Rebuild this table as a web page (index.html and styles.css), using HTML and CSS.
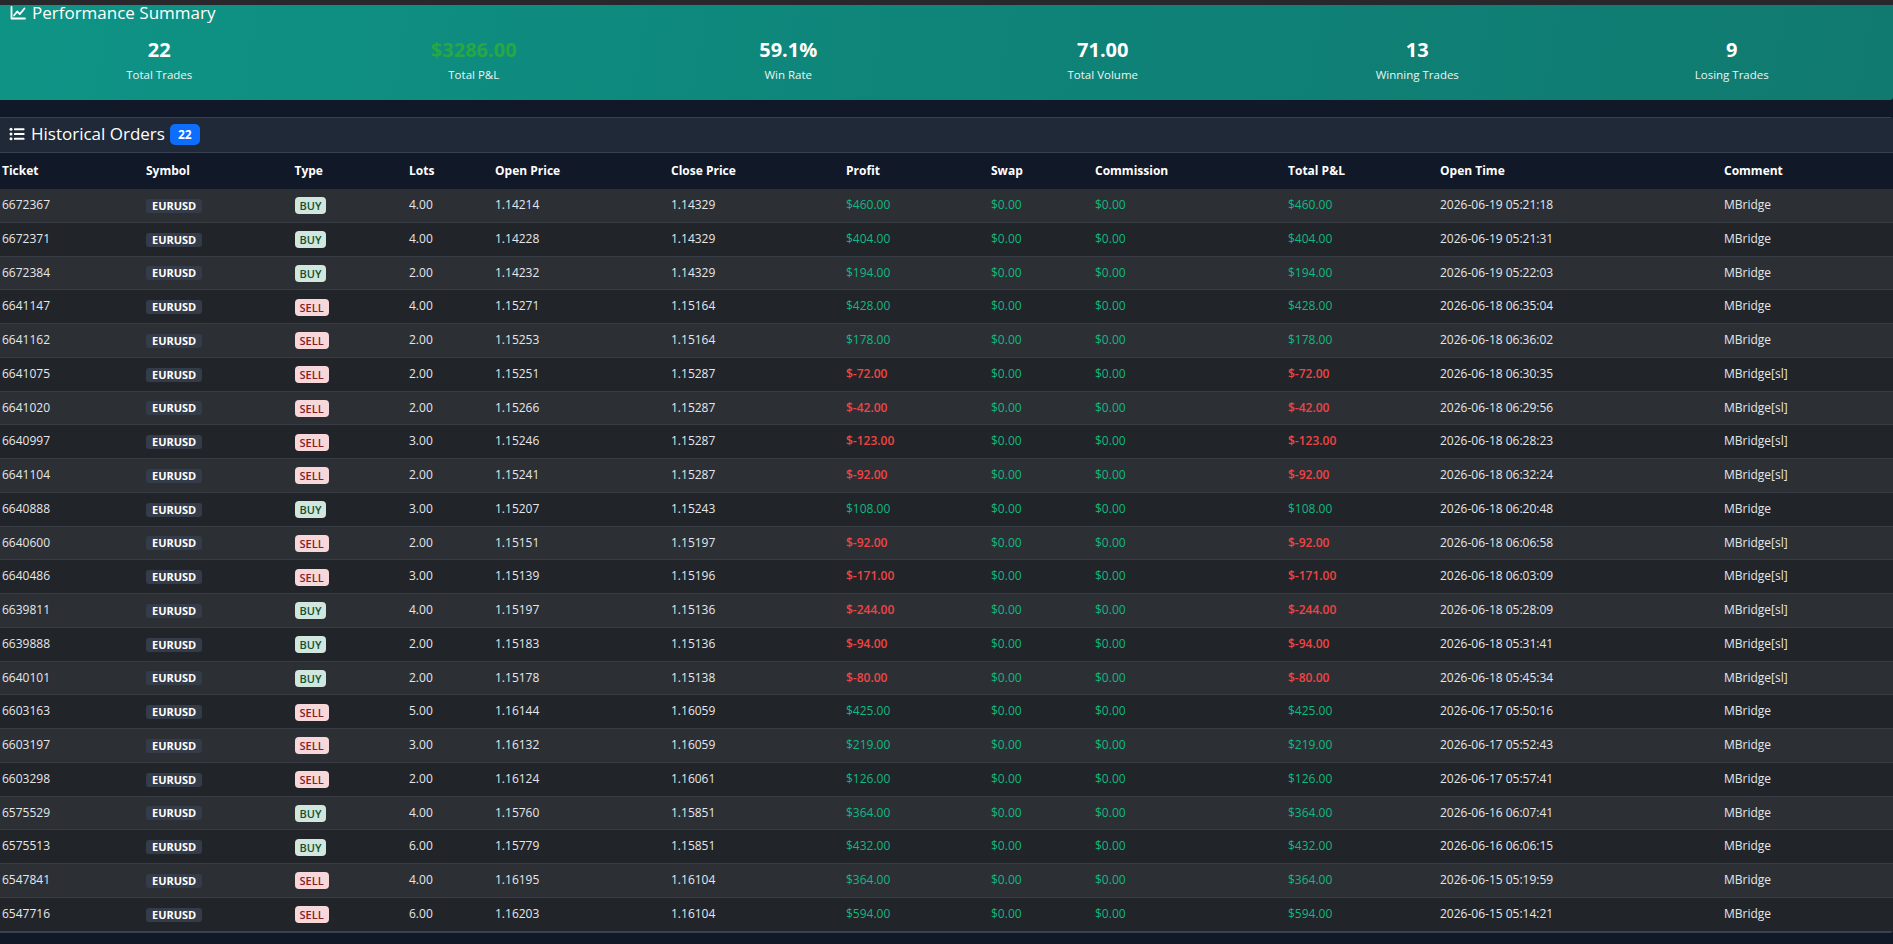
FILE: index.html
```html
<!DOCTYPE html>
<html lang="en">
<head>
<meta charset="utf-8">
<title>Trading History</title>
<link rel="stylesheet" href="styles.css">
</head>
<body>
<div class="topbar"></div>
<div class="page">
  <section class="summary">
    <h2 class="summary-title">
      <svg class="ico" viewBox="0 0 16 14" width="16" height="14" fill="none" stroke="#fff" stroke-width="1.8" stroke-linecap="round" stroke-linejoin="round"><path d="M1.5 1v11.5H15"/><path d="M4 9.5l3.2-4 2.6 2.6L14.5 2.5"/></svg>
      <span>Performance Summary</span>
    </h2>
    <div class="stats">
      <div class="stat"><div class="stat-value">22</div><div class="stat-label">Total Trades</div></div>
      <div class="stat"><div class="stat-value pos-total">$3286.00</div><div class="stat-label">Total P&amp;L</div></div>
      <div class="stat"><div class="stat-value">59.1%</div><div class="stat-label">Win Rate</div></div>
      <div class="stat"><div class="stat-value">71.00</div><div class="stat-label">Total Volume</div></div>
      <div class="stat"><div class="stat-value">13</div><div class="stat-label">Winning Trades</div></div>
      <div class="stat"><div class="stat-value">9</div><div class="stat-label">Losing Trades</div></div>
    </div>
  </section>

  <section class="orders">
    <div class="orders-head">
      <svg class="ico" viewBox="0 0 16 14" width="16" height="14" fill="#fff"><circle cx="2" cy="2.2" r="1.5"/><circle cx="2" cy="7" r="1.5"/><circle cx="2" cy="11.8" r="1.5"/><rect x="5" y="1.2" width="10.5" height="2" rx="0.6"/><rect x="5" y="6" width="10.5" height="2" rx="0.6"/><rect x="5" y="10.8" width="10.5" height="2" rx="0.6"/></svg>
      <span class="orders-title">Historical Orders</span>
      <span class="count">22</span>
    </div>
    <table class="grid">
      <thead>
        <tr>
          <th class="c-ticket">Ticket</th>
          <th class="c-symbol">Symbol</th>
          <th class="c-type">Type</th>
          <th class="c-lots">Lots</th>
          <th class="c-open">Open Price</th>
          <th class="c-close">Close Price</th>
          <th class="c-profit">Profit</th>
          <th class="c-swap">Swap</th>
          <th class="c-comm">Commission</th>
          <th class="c-total">Total P&amp;L</th>
          <th class="c-time">Open Time</th>
          <th class="c-comment">Comment</th>
        </tr>
      </thead>
      <tbody>
        <tr><td>6672367</td><td><span class="sym">EURUSD</span></td><td><span class="buy">BUY</span></td><td>4.00</td><td>1.14214</td><td>1.14329</td><td class="g">$460.00</td><td class="g">$0.00</td><td class="g">$0.00</td><td class="g">$460.00</td><td>2026-06-19 05:21:18</td><td>MBridge</td></tr>
        <tr><td>6672371</td><td><span class="sym">EURUSD</span></td><td><span class="buy">BUY</span></td><td>4.00</td><td>1.14228</td><td>1.14329</td><td class="g">$404.00</td><td class="g">$0.00</td><td class="g">$0.00</td><td class="g">$404.00</td><td>2026-06-19 05:21:31</td><td>MBridge</td></tr>
        <tr><td>6672384</td><td><span class="sym">EURUSD</span></td><td><span class="buy">BUY</span></td><td>2.00</td><td>1.14232</td><td>1.14329</td><td class="g">$194.00</td><td class="g">$0.00</td><td class="g">$0.00</td><td class="g">$194.00</td><td>2026-06-19 05:22:03</td><td>MBridge</td></tr>
        <tr><td>6641147</td><td><span class="sym">EURUSD</span></td><td><span class="sell">SELL</span></td><td>4.00</td><td>1.15271</td><td>1.15164</td><td class="g">$428.00</td><td class="g">$0.00</td><td class="g">$0.00</td><td class="g">$428.00</td><td>2026-06-18 06:35:04</td><td>MBridge</td></tr>
        <tr><td>6641162</td><td><span class="sym">EURUSD</span></td><td><span class="sell">SELL</span></td><td>2.00</td><td>1.15253</td><td>1.15164</td><td class="g">$178.00</td><td class="g">$0.00</td><td class="g">$0.00</td><td class="g">$178.00</td><td>2026-06-18 06:36:02</td><td>MBridge</td></tr>
        <tr><td>6641075</td><td><span class="sym">EURUSD</span></td><td><span class="sell">SELL</span></td><td>2.00</td><td>1.15251</td><td>1.15287</td><td class="r">$-72.00</td><td class="g">$0.00</td><td class="g">$0.00</td><td class="r">$-72.00</td><td>2026-06-18 06:30:35</td><td>MBridge[sl]</td></tr>
        <tr><td>6641020</td><td><span class="sym">EURUSD</span></td><td><span class="sell">SELL</span></td><td>2.00</td><td>1.15266</td><td>1.15287</td><td class="r">$-42.00</td><td class="g">$0.00</td><td class="g">$0.00</td><td class="r">$-42.00</td><td>2026-06-18 06:29:56</td><td>MBridge[sl]</td></tr>
        <tr><td>6640997</td><td><span class="sym">EURUSD</span></td><td><span class="sell">SELL</span></td><td>3.00</td><td>1.15246</td><td>1.15287</td><td class="r">$-123.00</td><td class="g">$0.00</td><td class="g">$0.00</td><td class="r">$-123.00</td><td>2026-06-18 06:28:23</td><td>MBridge[sl]</td></tr>
        <tr><td>6641104</td><td><span class="sym">EURUSD</span></td><td><span class="sell">SELL</span></td><td>2.00</td><td>1.15241</td><td>1.15287</td><td class="r">$-92.00</td><td class="g">$0.00</td><td class="g">$0.00</td><td class="r">$-92.00</td><td>2026-06-18 06:32:24</td><td>MBridge[sl]</td></tr>
        <tr><td>6640888</td><td><span class="sym">EURUSD</span></td><td><span class="buy">BUY</span></td><td>3.00</td><td>1.15207</td><td>1.15243</td><td class="g">$108.00</td><td class="g">$0.00</td><td class="g">$0.00</td><td class="g">$108.00</td><td>2026-06-18 06:20:48</td><td>MBridge</td></tr>
        <tr><td>6640600</td><td><span class="sym">EURUSD</span></td><td><span class="sell">SELL</span></td><td>2.00</td><td>1.15151</td><td>1.15197</td><td class="r">$-92.00</td><td class="g">$0.00</td><td class="g">$0.00</td><td class="r">$-92.00</td><td>2026-06-18 06:06:58</td><td>MBridge[sl]</td></tr>
        <tr><td>6640486</td><td><span class="sym">EURUSD</span></td><td><span class="sell">SELL</span></td><td>3.00</td><td>1.15139</td><td>1.15196</td><td class="r">$-171.00</td><td class="g">$0.00</td><td class="g">$0.00</td><td class="r">$-171.00</td><td>2026-06-18 06:03:09</td><td>MBridge[sl]</td></tr>
        <tr><td>6639811</td><td><span class="sym">EURUSD</span></td><td><span class="buy">BUY</span></td><td>4.00</td><td>1.15197</td><td>1.15136</td><td class="r">$-244.00</td><td class="g">$0.00</td><td class="g">$0.00</td><td class="r">$-244.00</td><td>2026-06-18 05:28:09</td><td>MBridge[sl]</td></tr>
        <tr><td>6639888</td><td><span class="sym">EURUSD</span></td><td><span class="buy">BUY</span></td><td>2.00</td><td>1.15183</td><td>1.15136</td><td class="r">$-94.00</td><td class="g">$0.00</td><td class="g">$0.00</td><td class="r">$-94.00</td><td>2026-06-18 05:31:41</td><td>MBridge[sl]</td></tr>
        <tr><td>6640101</td><td><span class="sym">EURUSD</span></td><td><span class="buy">BUY</span></td><td>2.00</td><td>1.15178</td><td>1.15138</td><td class="r">$-80.00</td><td class="g">$0.00</td><td class="g">$0.00</td><td class="r">$-80.00</td><td>2026-06-18 05:45:34</td><td>MBridge[sl]</td></tr>
        <tr><td>6603163</td><td><span class="sym">EURUSD</span></td><td><span class="sell">SELL</span></td><td>5.00</td><td>1.16144</td><td>1.16059</td><td class="g">$425.00</td><td class="g">$0.00</td><td class="g">$0.00</td><td class="g">$425.00</td><td>2026-06-17 05:50:16</td><td>MBridge</td></tr>
        <tr><td>6603197</td><td><span class="sym">EURUSD</span></td><td><span class="sell">SELL</span></td><td>3.00</td><td>1.16132</td><td>1.16059</td><td class="g">$219.00</td><td class="g">$0.00</td><td class="g">$0.00</td><td class="g">$219.00</td><td>2026-06-17 05:52:43</td><td>MBridge</td></tr>
        <tr><td>6603298</td><td><span class="sym">EURUSD</span></td><td><span class="sell">SELL</span></td><td>2.00</td><td>1.16124</td><td>1.16061</td><td class="g">$126.00</td><td class="g">$0.00</td><td class="g">$0.00</td><td class="g">$126.00</td><td>2026-06-17 05:57:41</td><td>MBridge</td></tr>
        <tr><td>6575529</td><td><span class="sym">EURUSD</span></td><td><span class="buy">BUY</span></td><td>4.00</td><td>1.15760</td><td>1.15851</td><td class="g">$364.00</td><td class="g">$0.00</td><td class="g">$0.00</td><td class="g">$364.00</td><td>2026-06-16 06:07:41</td><td>MBridge</td></tr>
        <tr><td>6575513</td><td><span class="sym">EURUSD</span></td><td><span class="buy">BUY</span></td><td>6.00</td><td>1.15779</td><td>1.15851</td><td class="g">$432.00</td><td class="g">$0.00</td><td class="g">$0.00</td><td class="g">$432.00</td><td>2026-06-16 06:06:15</td><td>MBridge</td></tr>
        <tr><td>6547841</td><td><span class="sym">EURUSD</span></td><td><span class="sell">SELL</span></td><td>4.00</td><td>1.16195</td><td>1.16104</td><td class="g">$364.00</td><td class="g">$0.00</td><td class="g">$0.00</td><td class="g">$364.00</td><td>2026-06-15 05:19:59</td><td>MBridge</td></tr>
        <tr><td>6547716</td><td><span class="sym">EURUSD</span></td><td><span class="sell">SELL</span></td><td>6.00</td><td>1.16203</td><td>1.16104</td><td class="g">$594.00</td><td class="g">$0.00</td><td class="g">$0.00</td><td class="g">$594.00</td><td>2026-06-15 05:14:21</td><td>MBridge</td></tr>
      </tbody>
    </table>
  </section>
</div>
</body>
</html>
```

FILE: styles.css
```css
* { box-sizing: border-box; }

html, body {
  margin: 0;
  padding: 0;
  background: #111827;
  color: #e5e7eb;
  font-family: "Open Sans", "Liberation Sans", sans-serif;
  overflow: hidden;
}

.topbar {
  height: 5px;
  background: #27272c;
}

/* ---------- summary ---------- */
.summary {
  height: 95px;
  background: linear-gradient(100deg, #0e9486 0%, #0f8479 50%, #107a70 100%);
  border-radius: 0 0 3px 0;
  color: #fff;
  padding: 0 4px 0 2px;
}

.summary-title {
  margin: 0;
  height: 16px;
  display: flex;
  align-items: center;
  gap: 6px;
  padding-left: 8px;
  font-size: 17px;
  font-weight: 400;
  line-height: 16px;
}

.ico { flex: none; display: block; }

.stats {
  display: grid;
  grid-template-columns: repeat(6, 1fr);
  margin-top: 17px;
}

.stat { text-align: center; }

.stat-value {
  font-size: 20px;
  font-weight: 700;
  line-height: 24px;
  color: #fff;
}

.stat-value.pos-total { color: #28a745; }

.stat-label {
  margin-top: 5px;
  font-size: 11.5px;
  line-height: 16px;
  color: #e8f5f3;
}

/* ---------- orders ---------- */
.orders {
  margin-top: 17px;
  border-top: 1px solid #374151;
  border-bottom: 1px solid #3a4252;
  border-radius: 0 3px 3px 0;
  overflow: hidden;
}

.orders-head {
  height: 35px;
  background: #1f2937;
  border-bottom: 1px solid #374151;
  display: flex;
  align-items: center;
  padding-left: 9px;
  padding-bottom: 2px;
  color: #fff;
}

.orders-title {
  margin-left: 6px;
  font-size: 17px;
  line-height: 20px;
}

.count {
  margin-left: 5px;
  background: #0d6efd;
  color: #fff;
  font-size: 12px;
  font-weight: 700;
  line-height: 21px;
  height: 21px;
  padding: 0 8px;
  border-radius: 5px;
}

.grid {
  width: 100%;
  table-layout: fixed;
  border-collapse: separate;
  border-spacing: 0;
  font-size: 12px;
}

.grid th {
  background: #111827;
  color: #fff;
  font-weight: 700;
  text-align: left;
  height: 36px;
  padding: 0 0 1px;
  vertical-align: middle;
  white-space: nowrap;
}

.grid td {
  padding: 0;
  line-height: 32.75px;
  border-bottom: 1px solid #383d45;
  color: #e5e7eb;
  white-space: nowrap;
  vertical-align: middle;
}

.grid tbody tr:last-child td { border-bottom-color: #3a4252; }

.grid th:first-child,
.grid td:first-child { padding-left: 2px; }

.grid tbody tr:nth-child(odd) td { background: #2c3035; }
.grid tbody tr:nth-child(even) td { background: #212428; }

.c-ticket { width: 146px; }
.c-symbol { width: 148.5px; }
.c-type { width: 114.5px; }
.c-lots { width: 86px; }
.c-open { width: 176px; }
.c-close { width: 175px; }
.c-profit { width: 145px; }
.c-swap { width: 104px; }
.c-comm { width: 193px; }
.c-total { width: 152px; }
.c-time { width: 284px; }
.c-comment { width: auto; }

.g { color: #10b981 !important; }
.r { color: #ef4444 !important; font-weight: 600; }

.sym,
.buy,
.sell {
  display: inline-block;
  vertical-align: middle;
  border-radius: 3px;
  font-size: 11px;
  line-height: 14px;
}

.sym {
  background: #343b49;
  color: #fff;
  font-weight: 700;
  padding: 0 6px;
  height: 14px;
}

.buy,
.sell {
  height: 17px;
  line-height: 17px;
  padding: 0 5px;
  font-weight: 600;
  border-radius: 4px;
}

.buy { background: #d1e7dd; color: #0f5132; }
.sell { background: #f8d7da; color: #842029; }
```
